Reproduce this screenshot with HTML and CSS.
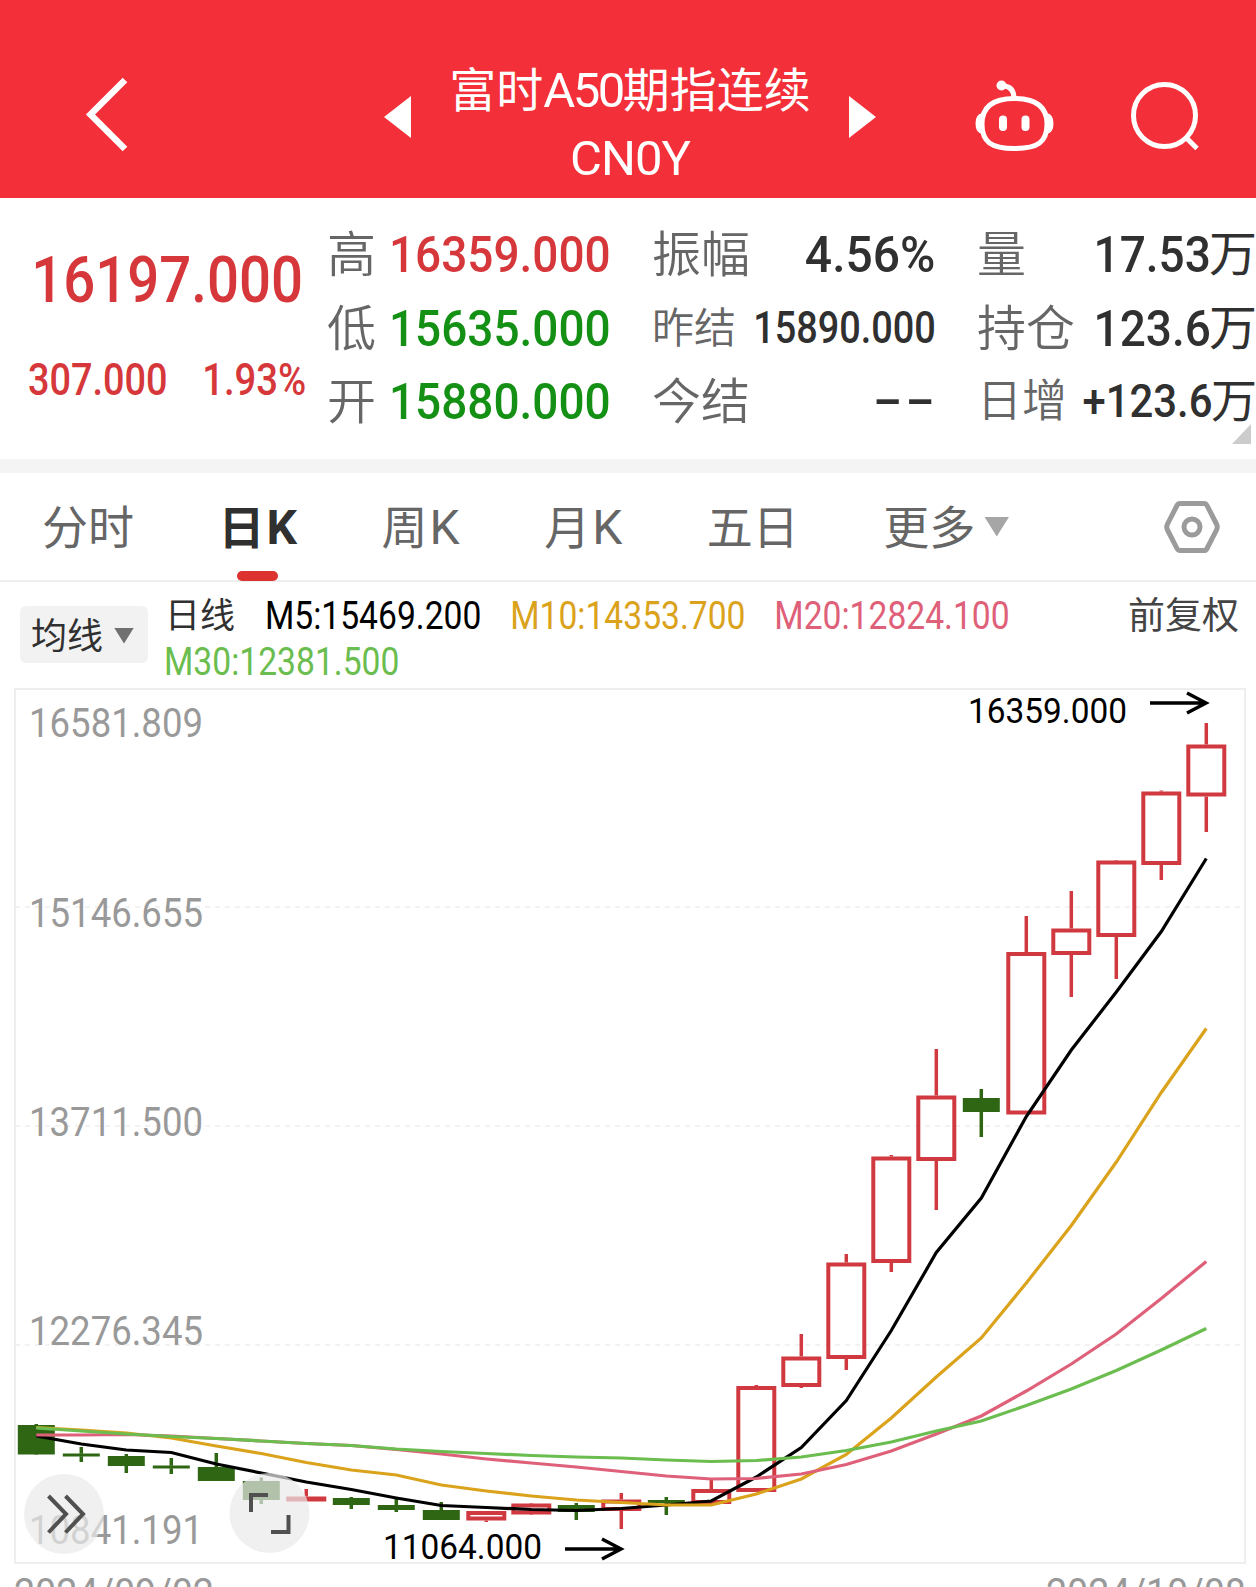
FILE: index.html
```html
<!DOCTYPE html>
<html lang="zh-CN">
<head>
  <meta charset="UTF-8" />
  <meta name="viewport" content="width=device-width, initial-scale=1.0" />
  <title>富时A50期指连续 CN0Y</title>
  <link rel="stylesheet" href="styles.css">
</head>
<body>
  <header class="header">
    <svg class="back" width="46" height="78" viewBox="84 76 46 78"><path d="M125 80 L90.500 114.500 L125 149" /></svg>
    <div class="switcher">
      <svg class="arrow" width="27" height="42" viewBox="0 0 27 42"><path d="M0 21 L27 0 V42 Z" /></svg>
      <div class="title">
        <div class="name">富时<span>A50</span>期指连续</div>
        <div class="code">CN0Y</div>
      </div>
      <svg class="arrow" width="27" height="42" viewBox="0 0 27 42"><path d="M27 21 L0 0 V42 Z" /></svg>
    </div>
    <svg class="robot" width="84" height="78" viewBox="973 76 84 78">
      <circle class="fill" cx="1001.5" cy="85.500" r="5" />
      <path d="M1003 86 Q1013.500 86 1014 98" />
      <path d="M1014.500 98.500 C1035 98.500 1047 106 1047 124 C1047 142 1038 148.500 1014.500 148.500 C991 148.500 982 142 982 124 C982 106 994 98.500 1014.500 98.500 Z" />
      <path class="fill" d="M982.500 113 Q975.500 114 975.500 123.500 Q975.500 133 982.500 134 Z M1046.500 113 Q1053.500 114 1053.500 123.500 Q1053.500 133 1046.500 134 Z" />
      <path class="eye" d="M1003 119.500 V127 M1025.500 119.500 V127" />
    </svg>
    <svg class="search" width="76" height="78" viewBox="1128 76 76 78">
      <circle cx="1164.500" cy="115.500" r="31" />
      <path d="M1185.500 137 L1197 148.500" />
    </svg>
  </header>

  <section class="quote">
    <div class="price">
      <div class="last"><span>16197.000</span></div>
      <div class="change"><span>307.000</span><span>1.93%</span></div>
    </div>
    <dl class="stats">
      <div><dt>高</dt><dd class="up">16359.000</dd></div>
      <div><dt>低</dt><dd class="down">15635.000</dd></div>
      <div><dt>开</dt><dd class="down">15880.000</dd></div>
    </dl>
    <dl class="stats">
      <div><dt>振幅</dt><dd class="percent">4.56%</dd></div>
      <div class="small"><dt>昨结</dt><dd>15890.000</dd></div>
      <div><dt>今结</dt><dd class="empty">--</dd></div>
    </dl>
    <dl class="stats units">
      <div><dt>量</dt><dd>17.53</dd><i>万</i></div>
      <div><dt>持仓</dt><dd>123.6</dd><i>万</i></div>
      <div class="medium"><dt>日增</dt><dd>+123.6</dd><i>万</i></div>
    </dl>
    <span class="expand"></span>
  </section>

  <nav class="tabs">
    <a>分时</a>
    <a class="active">日<b>K</b></a>
    <a>周<b>K</b></a>
    <a>月<b>K</b></a>
    <a>五日</a>
    <a>更多<span class="caret"></span></a>
    <svg class="settings" width="56" height="54" viewBox="0 0 56 54">
      <path d="M16 3.500 H40 Q42 3.500 43 5.500 L52.500 24 Q54 27 52.500 30 L43 48.500 Q42 50.500 40 50.500 H16 Q14 50.500 13 48.500 L3.500 30 Q2 27 3.500 24 L13 5.500 Q14 3.500 16 3.500 Z" />
      <circle cx="28" cy="27" r="8" />
    </svg>
  </nav>

  <section class="legend">
    <button class="ma-button">均线<span class="caret"></span></button>
    <span class="period">日线</span>
    <div class="ma-list">
      <span class="m5">M5:15469.200</span>
      <span class="m10">M10:14353.700</span>
      <span class="m20">M20:12824.100</span>
      <span class="m30">M30:12381.500</span>
    </div>
    <span class="adjust">前复权</span>
  </section>

  <section class="chart">
    <svg id="kline" width="1256" height="905" viewBox="0 682 1256 905">
      <rect class="frame" x="15" y="689" width="1230" height="874" />
      <path class="grid" d="M15 907 H1245 M15 1126 H1245 M15 1345 H1245" />
      <g class="axis">
        <text x="29" y="737" textLength="174" lengthAdjust="spacingAndGlyphs">16581.809</text>
        <text x="29" y="927" textLength="174" lengthAdjust="spacingAndGlyphs">15146.655</text>
        <text x="29" y="1136" textLength="174" lengthAdjust="spacingAndGlyphs">13711.500</text>
        <text x="29" y="1345" textLength="174" lengthAdjust="spacingAndGlyphs">12276.345</text>
        <text x="29" y="1544" textLength="174" lengthAdjust="spacingAndGlyphs">10841.191</text>
        <text x="14" y="1607" textLength="200" lengthAdjust="spacingAndGlyphs">2024/09/02</text>
        <text x="1046" y="1607" textLength="200" lengthAdjust="spacingAndGlyphs">2024/10/08</text>
      </g>
      <g id="candles"></g>
      <g id="lines"></g>
      <g class="mark">
        <text x="968" y="723" textLength="159" lengthAdjust="spacingAndGlyphs">16359.000</text>
        <path d="M1150 703 H1206 M1187 693 L1206 703 L1187 713" />
        <text x="383" y="1559" textLength="159" lengthAdjust="spacingAndGlyphs">11064.000</text>
        <path d="M565 1549 H621 M602 1539 L621 1549 L602 1559" />
      </g>
      <g class="float">
        <circle cx="64" cy="1514" r="40" />
        <path d="M48.500 1496 L66 1514 L48.500 1532.500 M65.500 1496 L83 1514 L65.500 1532.500" />
        <circle cx="269.500" cy="1513" r="40" />
        <path d="M251 1512 V1495 H268 M288.500 1515 V1532 H271" />
      </g>
    </svg>
  </section>

  <script>
    const NS = "http://www.w3.org/2000/svg";
    const START = 36.3;
    const STEP = 45;

    // [direction, wick top, body top, body bottom, wick bottom]
    const candles = [
      ["down", 1424, 1425, 1454.5, 1454.5],
      ["down", 1447, 1453.5, 1456.5, 1462],
      ["down", 1454, 1456, 1466, 1473],
      ["down", 1458, 1465.5, 1468.5, 1474],
      ["down", 1453, 1467, 1481, 1481],
      ["down", 1477.5, 1481, 1500, 1504],
      ["up", 1489, 1496.5, 1501.5, 1501.5],
      ["down", 1497, 1498, 1505, 1509],
      ["down", 1498, 1505, 1510, 1512],
      ["down", 1502, 1510, 1520, 1520],
      ["up", 1511, 1511, 1520.5, 1522],
      ["up", 1503, 1503.5, 1514.5, 1515],
      ["down", 1503, 1505, 1512, 1520],
      ["up", 1493, 1499.5, 1511, 1529],
      ["down", 1497, 1500, 1503, 1515],
      ["up", 1480, 1489, 1504, 1504],
      ["up", 1385, 1386, 1492, 1492],
      ["up", 1334, 1356.5, 1387, 1388],
      ["up", 1254, 1262.5, 1359, 1370],
      ["up", 1155, 1156.5, 1263, 1272],
      ["up", 1049, 1095.5, 1161, 1210],
      ["down", 1089, 1098, 1112, 1137],
      ["up", 916, 952, 1114.5, 1114.5],
      ["up", 891, 928.5, 955, 997],
      ["up", 860, 860.5, 937, 979],
      ["up", 790.5, 791.5, 865, 880],
      ["up", 723, 744.5, 796.5, 832]
    ];

    const averages = {
      m5: [1436, 1444, 1450, 1452.5, 1464, 1473, 1482, 1489.5, 1498, 1505.5, 1507.5, 1509.5, 1510.5, 1508.5, 1505, 1501, 1477, 1447.5, 1400.5, 1330.5, 1252.5, 1198, 1116.5, 1050, 992, 931.5, 858.5],
      m10: [1427.5, 1430, 1433, 1438, 1446, 1453.5, 1462.5, 1470, 1475, 1485, 1491, 1496, 1500, 1502.5, 1505, 1505, 1494, 1479, 1454.5, 1418, 1377, 1338, 1283, 1225.5, 1162, 1092.5, 1028.5],
      m20: [1435, 1435, 1434.5, 1436, 1438.5, 1441, 1443.5, 1445.5, 1449.5, 1454, 1459, 1463, 1467, 1471.5, 1476, 1479, 1478.5, 1474, 1464.5, 1451, 1434, 1416, 1391, 1364, 1334, 1298.5, 1261.5],
      m30: [1428, 1431, 1434, 1436.5, 1438.5, 1441, 1443.5, 1445.5, 1449, 1451.5, 1453.5, 1455.5, 1457, 1458, 1460, 1461.5, 1460.5, 1457, 1450.5, 1442, 1431, 1421, 1405.5, 1389, 1370.5, 1350, 1328.5]
    };

    function add(parent, tag, attrs) {
      const el = document.createElementNS(NS, tag);
      for (const key in attrs) el.setAttribute(key, attrs[key]);
      document.getElementById(parent).appendChild(el);
    }

    candles.forEach(([dir, high, top, bottom, low], i) => {
      const x = START + STEP * i;
      add("candles", "path", { class: "wick " + dir, d: `M${x} ${high} V${top} M${x} ${bottom} V${low}` });
      if (dir === "up") {
        add("candles", "rect", { class: "body up", x: x - 18, y: top + 2, width: 36, height: bottom - top - 4 });
      } else {
        add("candles", "path", { class: "wick down", d: `M${x} ${top} V${bottom}` });
        add("candles", "rect", { class: "body down", x: x - 18.5, y: top, width: 37, height: bottom - top });
      }
    });

    for (const name in averages) {
      const points = averages[name].map((y, i) => `${START + STEP * i},${y}`).join(" ");
      add("lines", "polyline", { class: name, points: points });
    }
  </script>
</body>
</html>
```
FILE: styles.css
```css
:root {
  --red: #d5373b;
  --green: #149014;
  --text: #303030;
  --label: #666;
  --num: Roboto, "Noto Sans CJK SC", sans-serif;
}

* {
  box-sizing: border-box;
}

body {
  margin: 0;
  width: 1256px;
  height: 1587px;
  overflow: hidden;
  background: #fff;
  color: var(--text);
  font-family: "Noto Sans CJK SC", sans-serif;
}

svg {
  display: block;
  flex: none;
}

/* header */
.header {
  display: flex;
  align-items: flex-start;
  height: 198px;
  padding: 76px 52px 0 84px;
  background: #f32f39;
  color: #fff;
}

.header svg {
  fill: none;
  stroke: #fff;
  stroke-width: 5;
}

.header .back {
  stroke-width: 6.5;
}

.header .fill,
.header .arrow {
  fill: #fff;
  stroke: none;
}

.header .eye {
  stroke-width: 8;
  stroke-linecap: round;
}

.switcher {
  display: flex;
  justify-content: space-between;
  width: 492px;
  margin-left: 254px;
}

.switcher .arrow {
  margin-top: 20px;
}

.title {
  width: 420px;
  margin: -22px 0 0;
  text-align: center;
  white-space: nowrap;
  font-size: 47px;
  font-weight: 400;
  line-height: 66px;
}

.name span {
  font-family: var(--num);
  font-size: 49px;
  letter-spacing: -2.5px;
}

.code {
  font-family: var(--num);
  font-size: 49px;
  line-height: 69px;
  letter-spacing: -1px;
}

.robot {
  margin-left: 97px;
}

.search {
  margin-left: 71px;
}

/* quote */
.quote {
  position: relative;
  display: grid;
  grid-template-columns: 327px 325px 325px 279px;
  height: 261px;
}

.price {
  width: 303px;
  font-family: var(--num);
  font-weight: 500;
  color: var(--red);
}

.price span {
  display: inline-block;
  transform: scaleX(0.86);
  transform-origin: right;
}

.last {
  display: flex;
  justify-content: flex-end;
  height: 120px;
  padding-top: 43px;
  font-size: 65.5px;
  line-height: 78px;
}

.change {
  display: flex;
  justify-content: space-between;
  padding: 38px 0 0 28px;
  font-size: 43.500px;
  line-height: 50px;
}

.change span:first-child {
  transform: scaleX(0.87);
  transform-origin: left;
}

.change span:last-child {
  margin-right: 2px;
  transform: scaleX(0.88);
}

.stats {
  width: 284px;
  margin: 17px 0 0;
}

.stats > div {
  display: flex;
  align-items: center;
  justify-content: space-between;
  height: 73.5px;
  font-size: 49px;
  line-height: 73px;
  white-space: nowrap;
}

.stats dt,
.stats i {
  margin-top: -2px;
}

.stats dt {
  color: var(--label);
  font-weight: 350;
}

.stats dd {
  margin: 6px 0 0 -20px;
  font-family: var(--num);
  font-size: 50.5px;
  font-weight: 500;
  transform: scaleX(0.91);
  transform-origin: right;
}

.stats .up {
  color: var(--red);
}

.stats .down {
  color: var(--green);
}

.stats .percent {
  margin-right: 1px;
  transform: scaleX(0.95);
}

.stats .small {
  font-size: 42px;
}

.stats .small dd {
  font-size: 43.500px;
  transform: scaleX(0.87);
}

.stats .empty {
  margin: 2px -2px 0 0;
  letter-spacing: 2px;
  transform: scaleX(1.7);
}

.units {
  width: 279px;
}

.units i {
  width: 47px;
  font-size: 48px;
  font-style: normal;
}

.units dd {
  margin-left: auto;
  margin-right: -2px;
}

.units .medium {
  font-size: 45px;
}

.units .medium i {
  position: relative;
  width: 45px;
  font-size: 46px;
}

/* pull the value up against its unit */
.units .medium dd {
  margin-left: -14px;
  margin-right: -4px;
  font-size: 46.5px;
  transform: translateX(6px) scaleX(0.9);
}

.expand {
  position: absolute;
  right: 5px;
  bottom: 15px;
  width: 19px;
  height: 20px;
  background: #ccc;
  clip-path: polygon(100% 0, 100% 100%, 0 100%);
}

/* tabs */
.tabs {
  display: flex;
  align-items: center;
  height: 123px;
  padding: 0 36px 0 42px;
  border-top: 14px solid #f4f4f4;
  border-bottom: 2px solid #eee;
  font-size: 46px;
  line-height: 104px;
  color: var(--label);
}

.tabs a {
  position: relative;
  display: flex;
  align-items: center;
  height: 107px;
  margin-right: 84.5px;
  padding-bottom: 5px;
  white-space: nowrap;
}

.tabs b {
  margin: 7px 0 0 2px;
  font-family: var(--num);
  font-size: 48px;
  font-weight: 400;
}

.tabs .active,
.tabs .active b {
  font-weight: 700;
  color: var(--text);
}

.tabs .active::after {
  content: "";
  position: absolute;
  left: 18px;
  bottom: -1px;
  width: 41px;
  height: 10px;
  border-radius: 5px;
  background: #dc3230;
}

.caret {
  width: 25px;
  height: 20px;
  margin: 5px 0 0 9px;
  background: #a6a6a6;
  clip-path: polygon(0 0, 100% 0, 50% 100%);
}

.settings {
  margin-left: auto;
  fill: none;
  stroke: #9b9b9b;
  stroke-width: 5;
}

/* moving averages */
.legend {
  display: flex;
  align-items: flex-start;
  height: 100px;
  padding-left: 20px;
  white-space: nowrap;
}

.legend > * {
  flex: none;
}

.ma-button {
  display: flex;
  align-items: center;
  width: 128px;
  height: 57px;
  margin-top: 24px;
  padding: 0 0 3px 11px;
  border: none;
  border-radius: 6px;
  background: #f2f2f2;
  color: var(--text);
  font-family: inherit;
  font-size: 36px;
}

.ma-button .caret {
  width: 20px;
  height: 16px;
  margin-left: 11px;
  background: #707070;
}

.period {
  width: 70px;
  margin-left: 17px;
  font-size: 35px;
  line-height: 62px;
}

.ma-list {
  display: flex;
  flex-wrap: wrap;
  width: 970px;
  margin: 11px -110px 0 -71px;
  padding-left: 114px;
  column-gap: 32.5px;
  font-family: var(--num);
  font-size: 38px;
  line-height: 46px;
  transform: scaleX(0.885);
  transform-origin: left;
}

.m5 { color: #000; }
.m10 { color: #dba21c; }
.m20 { color: #de6079; }
.m30 { color: #6abd4e; }

.ma-list .m30 {
  margin-left: -114px;
}

.adjust {
  margin-left: auto;
  padding-right: 17px;
  font-size: 37px;
  line-height: 63px;
  color: #444;
}

/* chart */
.frame {
  fill: none;
  stroke: #eee;
  stroke-width: 2;
}

.grid {
  stroke: #eee;
  stroke-width: 1.5;
  stroke-dasharray: 5 5;
}

.axis text,
.mark text {
  font-family: var(--num);
}

.axis text {
  font-size: 41px;
  fill: #999;
}

.mark text {
  font-size: 35px;
  fill: #000;
}

.mark path {
  fill: none;
  stroke: #000;
  stroke-width: 3.5;
}

.wick {
  stroke-width: 3.5;
}

.wick.up,
.body.up {
  fill: none;
  stroke: #d0393f;
}

.body.up {
  stroke-width: 4;
}

.wick.down {
  stroke: #2f6614;
}

.body.down {
  fill: #2f6614;
}

#lines polyline {
  fill: none;
  stroke: currentColor;
  stroke-width: 3.2;
}

.float circle {
  fill: #eaeaea;
  fill-opacity: 0.7;
}

.float path {
  fill: none;
  stroke: #505050;
  stroke-width: 4;
}
```
